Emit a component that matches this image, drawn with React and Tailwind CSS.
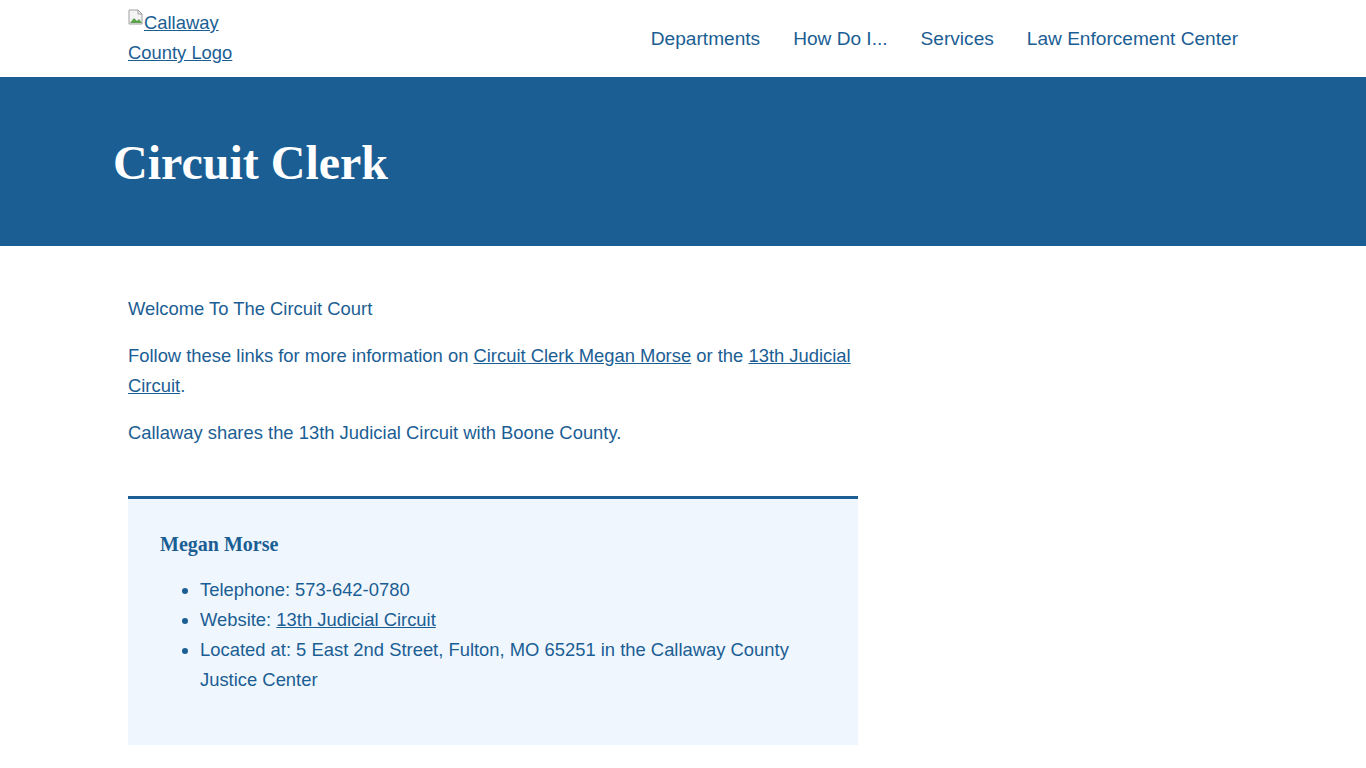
export default function App() {
  const font = { fontFamily: '"Liberation Sans", Arial, sans-serif' };
  return (
    <div className="min-h-screen bg-white text-[#1b5e94] text-[18.4px] leading-[30px]" style={font}>
      <header className="h-[77px] flex items-start justify-between pl-[128px] pr-[128px]">
        <a href="#" className="block w-[120px] pt-[8px] underline text-[#1b5e94] leading-[30px]">
          <svg className="inline-block align-top mt-[1px]" width="16" height="16" viewBox="0 0 16 16">
            <path d="M1 1h9l4 4v10H1z" fill="#f4f4f4" stroke="#a0a0a0" />
            <path d="M10 1v4h4" fill="none" stroke="#a0a0a0" />
            <path d="M2 14l4-5 3 3 2-2 3 4z" fill="#5ba24a" />
          </svg>
          Callaway County Logo
        </a>
        <nav className="flex gap-[33px] pt-[24px] text-[19.1px] leading-[30px]">
          <a href="#">Departments</a>
          <a href="#">How Do I...</a>
          <a href="#">Services</a>
          <a href="#">Law Enforcement Center</a>
        </nav>
      </header>
      <section className="bg-[#1b5e94] h-[169px] flex items-center pl-[113px]">
        <h1 className="text-white font-bold text-[48px] leading-none pt-[2px]" style={{ fontFamily: '"Liberation Serif", "Times New Roman", serif' }}>
          Circuit Clerk
        </h1>
      </section>
      <main className="pl-[128px] pt-[48px]">
        <div className="w-[730px]">
          <p className="mb-[17px]">Welcome To The Circuit Court</p>
          <p className="mb-[17px]">
            Follow these links for more information on <a href="#" className="underline">Circuit Clerk Megan Morse</a> or the <a href="#" className="underline">13th Judicial Circuit</a>.
          </p>
          <p>Callaway shares the 13th Judicial Circuit with Boone County.</p>
          <div className="mt-[48px] border-t-[3px] border-[#1b5e94] bg-[#eff6fd] h-[249px] pl-[32px] pr-[32px] pt-[30px]">
            <h3 className="font-bold text-[20px] leading-[30px] mb-[16px]" style={{ fontFamily: '"Liberation Serif", "Times New Roman", serif' }}>
              Megan Morse
            </h3>
            <ul className="list-disc pl-[40px]">
              <li>Telephone: 573-642-0780</li>
              <li>Website: <a href="#" className="underline">13th Judicial Circuit</a></li>
              <li>Located at: 5 East 2nd Street, Fulton, MO 65251 in the Callaway County Justice Center</li>
            </ul>
          </div>
        </div>
      </main>
    </div>
  );
}
